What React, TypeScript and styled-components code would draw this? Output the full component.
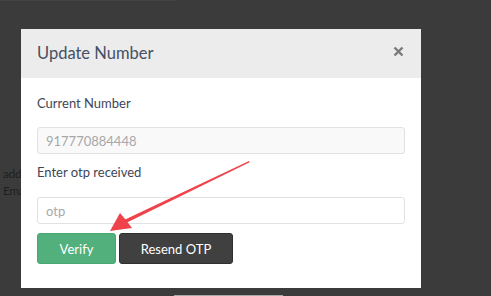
import React from 'react'
import styled, { createGlobalStyle } from 'styled-components'

const GlobalStyle = createGlobalStyle`
  html, body {
    margin: 0;
    padding: 0;
    background: #3b3b3b;
    font-family: Lato, 'Open Sans', 'Liberation Sans', sans-serif;
  }
`

const Page = styled.div`
  position: relative;
  width: 491px;
  height: 296px;
  overflow: hidden;
  background: #3b3b3b;
`

const TopEdge = styled.div`
  width: 176px;
  height: 1px;
  background: #434343;
`

const BehindText = styled.div`
  width: 18px;
  white-space: nowrap;
  padding: 164px 0 0 3px;
  font-size: 12px;
  letter-spacing: -0.4px;
  line-height: 17px;
  color: #1f1f1f;
`

const BottomBar = styled.div`
  position: absolute;
  left: 174px;
  bottom: 0;
  width: 109px;
  height: 1px;
  background: #a8a8a8;
`

const Modal = styled.div`
  position: absolute;
  left: 21px;
  top: 29px;
  width: 400px;
  height: 259px;
  background: #ffffff;
  display: flex;
  flex-direction: column;
`

const Header = styled.div`
  height: 49px;
  background: #ececec;
  display: flex;
  align-items: center;
  justify-content: space-between;
  padding: 0 17px 2px 16px;
  box-sizing: border-box;
`

const Title = styled.h4`
  margin: 0;
  font-size: 16.5px;
  font-weight: 400;
  color: #465064;
`

const Close = styled.button`
  border: 0;
  background: none;
  padding: 0;
  margin-top: -3px;
  width: 12px;
  height: 12px;
  display: flex;
  align-items: center;
  justify-content: center;
`

const Body = styled.div`
  padding: 16px 16px 0 16px;
  display: flex;
  flex-direction: column;
`

const Label = styled.label<{ $gap: number; $top?: number }>`
  font-size: 13px;
  line-height: 18px;
  color: #3e4656;
  margin-top: ${p => p.$top || 0}px;
  margin-bottom: ${p => p.$gap}px;
`

const Field = styled.input<{ $readOnlyLook?: boolean }>`
  height: 27px;
  box-sizing: border-box;
  width: 368px;
  border: 1px solid #e2e2e2;
  border-radius: 3px;
  padding: 0 8px;
  font-family: inherit;
  font-size: 13px;
  color: #a8a8a8;
  background: ${p => (p.$readOnlyLook ? '#f9f9f9' : '#ffffff')};
  outline: none;
  &::placeholder {
    color: #a8a8a8;
  }
`

const Actions = styled.div`
  display: flex;
  gap: 3px;
  margin-top: 9px;
`

const Btn = styled.button<{ $kind: 'green' | 'dark'; $w: number }>`
  width: ${p => p.$w}px;
  height: 31px;
  border-radius: 3px;
  font-family: inherit;
  font-size: 13px;
  color: #ffffff;
  cursor: pointer;
  background: ${p => (p.$kind === 'green' ? '#52b07c' : '#404040')};
  border: 1px solid ${p => (p.$kind === 'green' ? '#47a86f' : '#2f2f2f')};
`

const ArrowLayer = styled.svg`
  position: absolute;
  left: 0;
  top: 0;
  pointer-events: none;
`

export default function App() {
  return (
    <Page>
      <GlobalStyle />
      <TopEdge />
      <BehindText>
        <div>add</div>
        <div>Ema</div>
      </BehindText>
      <BottomBar />
      <Modal>
        <Header>
          <Title>Update Number</Title>
          <Close aria-label="close">
            <svg width="11" height="11" viewBox="0 0 11 11">
              <path d="M1.5 1.5 L9.5 9.5 M9.5 1.5 L1.5 9.5" stroke="#7a7a7a" strokeWidth="2.4" />
            </svg>
          </Close>
        </Header>
        <Body>
          <Label $gap={15}>Current Number</Label>
          <Field $readOnlyLook readOnly value="917770884448" />
          <Label $gap={16} $top={9}>Enter otp received</Label>
          <Field placeholder="otp" />
          <Actions>
            <Btn $kind="green" $w={79}>Verify</Btn>
            <Btn $kind="dark" $w={114}>Resend OTP</Btn>
          </Actions>
        </Body>
      </Modal>
      <ArrowLayer width="491" height="296" viewBox="0 0 491 296">
        <polygon points="249,161 249.6,162.3 124,224 122,221" fill="#f0424a" />
        <polygon points="110,231 120,213 125,219 132,228" fill="#f0424a" />
      </ArrowLayer>
    </Page>
  )
}
